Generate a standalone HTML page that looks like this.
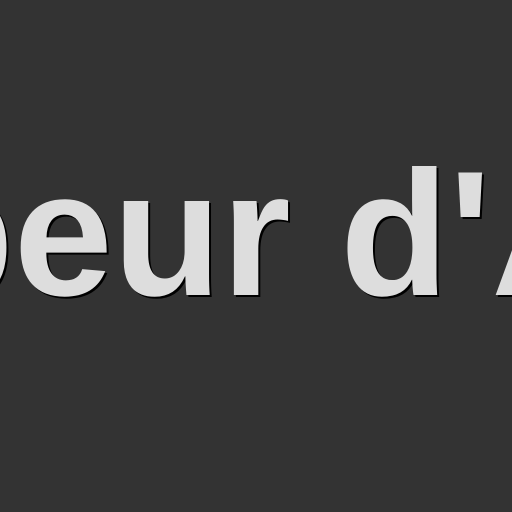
<html><head><style>
body{margin:0;width:512px;height:512px;background:#333333;overflow:hidden;position:relative}
div{position:absolute;left:-95px;top:145px;font:bold 178px/178px "Liberation Sans",sans-serif;color:#dddddd;white-space:nowrap;text-shadow:2px 2px 0 #000}
</style></head><body><div>peur d'A</div></body></html>
